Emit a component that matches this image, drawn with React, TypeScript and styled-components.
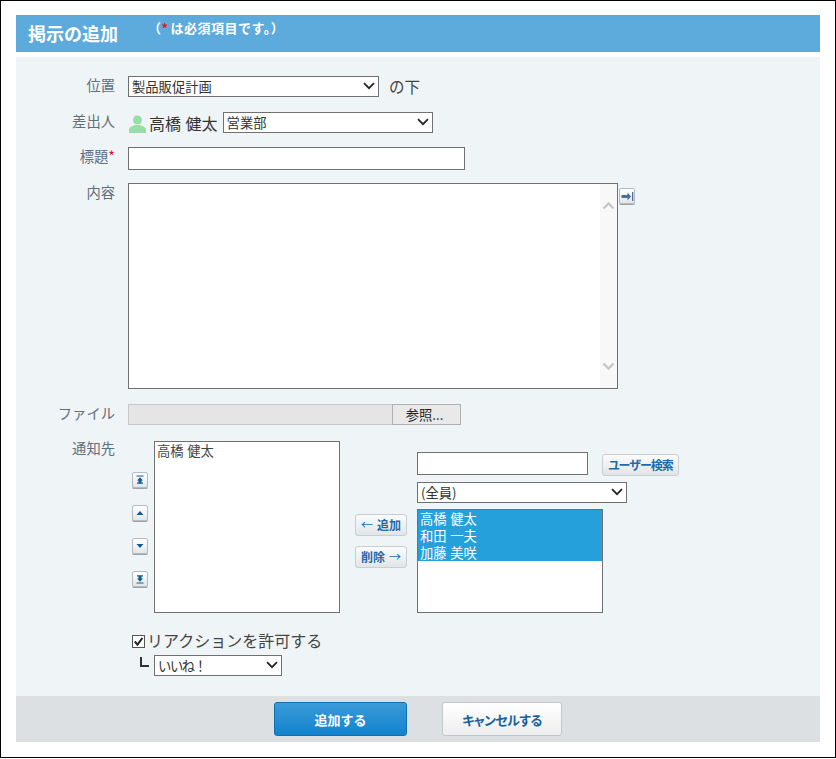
import React from 'react';
import styled, { createGlobalStyle } from 'styled-components';

const FONT = `"Noto Sans CJK JP", "Noto Sans", "Liberation Sans", sans-serif`;

const Global = createGlobalStyle`
  html, body { margin: 0; padding: 0; background: #fff; }
  body { font-family: ${FONT}; }
  * { box-sizing: border-box; }
`;

const Frame = styled.div`
  width: 836px;
  height: 758px;
  border: 1px solid #000;
  padding: 14px 15px 0;
  background: #fff;
`;
const Header = styled.header`
  height: 37px;
  background: #5dabdc;
  color: #fff;
  display: flex;
  align-items: flex-start;
  padding-left: 12px;
  margin-bottom: 5px;
`;
const Title = styled.h1`
  margin: 6px 0 0;
  font-size: 18px;
  line-height: 24px;
  font-weight: 700;
  width: 120px;
`;
const Note = styled.span`
  margin-top: 4px;
  font-size: 13px;
  line-height: 18px;
  font-weight: 700;
  letter-spacing: 0.5px;
`;
const Req = styled.span`
  color: #e8112d;
`;
const NoteReq = styled(Req)`
  margin-right: 2px;
`;
const Form = styled.form`
  margin: 0;
  height: 639px;
  background: #eff4f7;
  padding-top: 19px;
`;
const Row = styled.div<{ $after: number }>`
  display: grid;
  grid-template-columns: 112px 1fr;
  margin-bottom: ${p => p.$after}px;
`;
const Label = styled.label<{ $top?: number }>`
  text-align: right;
  padding-right: 13px;
  margin-top: ${p => p.$top ?? 0}px;
  font-size: 14.3px;
  line-height: 18px;
  color: #5f6f7c;
`;
const Inline = styled.div`
  display: flex;
  align-items: center;
  height: 21px;
`;
const SelectWrap = styled.div<{ $w: number }>`
  position: relative;
  width: ${p => p.$w}px;
  height: 21px;
  flex: none;
`;
const Select = styled.select<{ $tight?: boolean }>`
  display: block;
  appearance: none;
  width: 100%;
  height: 100%;
  border: 1px solid #707070;
  border-radius: 0;
  background: #fff;
  padding: 0 0 0 3px;
  font-family: ${FONT};
  font-size: 13.3px;
  line-height: 19px;
  letter-spacing: ${p => (p.$tight ? '-1.4px' : '0')};
  color: #333;
`;
const Caret = styled.svg`
  position: absolute;
  right: 4px;
  top: 6px;
  width: 12px;
  height: 8px;
  pointer-events: none;
`;
const Chevron = () => (
  <Caret viewBox="0 0 12 8">
    <path d="M1 1.2 6 6.2 11 1.2" fill="none" stroke="#222" strokeWidth="1.7" />
  </Caret>
);
const Drop = ({ w, value, tight }: { w: number; value: string; tight?: boolean }) => (
  <SelectWrap $w={w}>
    <Select defaultValue={value} $tight={tight}>
      <option>{value}</option>
    </Select>
    <Chevron />
  </SelectWrap>
);
const After = styled.span`
  margin: 0 0 2px 10px;
  font-size: 15.5px;
  line-height: 20px;
  color: #444;
`;
const Person = styled.svg`
  width: 17px;
  height: 18px;
  margin: 2px 3px 0 1px;
  flex: none;
`;
const Name = styled.span`
  font-size: 16px;
  line-height: 20px;
  color: #333;
  margin-right: 5px;
  white-space: pre;
  word-spacing: 1px;
`;
const TextInput = styled.input<{ $w: number; $h: number }>`
  display: block;
  width: ${p => p.$w}px;
  height: ${p => p.$h}px;
  border: 1px solid #707070;
  background: #fff;
  padding: 0 3px;
  outline: none;
`;
const AreaRow = styled.div`
  display: flex;
  align-items: flex-start;
`;
const AreaBox = styled.div`
  width: 490px;
  height: 206px;
  border: 1px solid #707070;
  background: #fff;
  display: flex;
`;
const Area = styled.textarea`
  flex: 1;
  border: 0;
  outline: none;
  resize: none;
  overflow: hidden;
  background: transparent;
`;
const Scroll = styled.div`
  width: 17px;
  background: #f8f8f8;
  display: flex;
  flex-direction: column;
  justify-content: space-between;
  padding: 17px 0 17px;
  align-items: center;
`;
const ScrollMark = styled.svg`
  width: 13px;
  height: 9px;
`;
const IconBtn = styled.button`
  width: 16px;
  height: 16px;
  padding: 0;
  display: flex;
  align-items: center;
  justify-content: center;
  border: 1px solid #b4bcc2;
  border-radius: 2px;
  background: linear-gradient(#ffffff, #e3e6e8);
  box-shadow: 0 1px 0 #9aa3a9;
`;
const ExpandBtn = styled(IconBtn)`
  margin: 5px 0 0 1px;
`;
const FileRow = styled.div`
  display: flex;
  height: 21px;
`;
const FileName = styled.div`
  width: 264px;
  background: #e5e5e5;
  border: 1px solid #c8c8c8;
  border-right: 0;
`;
const Browse = styled.button`
  width: 69px;
  padding: 0 4px 0 0;
  border: 1px solid #b0b0b0;
  background: #e9e9e9;
  font-family: ${FONT};
  font-size: 13.3px;
  line-height: 18px;
  color: #222;
`;
const Notify = styled.div`
  display: flex;
  align-items: flex-start;
  padding-left: 4px;
`;
const MoveCol = styled.div`
  width: 16px;
  margin-right: 6px;
  padding-top: 31px;
  display: flex;
  flex-direction: column;
  gap: 17px;
`;
const ListBox = styled.div<{ $w: number; $h: number }>`
  width: ${p => p.$w}px;
  height: ${p => p.$h}px;
  border: 1px solid #707070;
  background: #fff;
  font-size: 13.3px;
  line-height: 17px;
  color: #444;
  flex: none;
`;
const Opt = styled.div<{ $sel?: boolean }>`
  height: 17px;
  padding-left: 2px;
  overflow: hidden;
  white-space: pre;
  word-spacing: 0.6px;
  background: ${p => (p.$sel ? '#26a0da' : 'transparent')};
  color: ${p => (p.$sel ? '#fff' : '#444')};
`;
const MidCol = styled.div`
  margin: 73px 10px 0 15px;
  display: flex;
  flex-direction: column;
  gap: 10px;
`;
const SmallBtn = styled.button<{ $w: number }>`
  width: ${p => p.$w}px;
  height: 22px;
  padding: 0;
  border: 1px solid #c6cfd3;
  border-radius: 3px;
  background: linear-gradient(#fbfbfb, #e2e5e7);
  color: #1a6bab;
  font-family: ${FONT};
  font-size: 12px;
  line-height: 18px;
  font-weight: 700;
  white-space: pre;
  word-spacing: 1.5px;
`;
const Thin = styled.span`
  font-weight: 400;
`;
const RightCol = styled.div`
  padding-top: 11px;
  display: flex;
  flex-direction: column;
  gap: 6px;
`;
const SearchRow = styled.div`
  display: flex;
  align-items: flex-start;
  gap: 14px;
`;
const SearchBtn = styled(SmallBtn)`
  margin-top: 2px;
  font-feature-settings: "palt";
  letter-spacing: -1px;
`;
const OptionBlock = styled.div`
  padding: 19px 0 0 4px;
`;
const CheckRow = styled.label`
  display: flex;
  align-items: center;
  height: 16px;
  font-size: 16px;
  line-height: 16px;
  color: #444;
  white-space: nowrap;
`;
const CheckBox = styled.svg`
  width: 13px;
  height: 13px;
  margin: 2px 2px 0 0;
  flex: none;
`;
const SubRow = styled.div`
  display: flex;
  margin-top: 7px;
`;
const Corner = styled.span`
  width: 9px;
  height: 10px;
  margin: 2px 5px 0 8px;
  border-left: 2px solid #333;
  border-bottom: 2px solid #333;
`;
const Footer = styled.footer`
  height: 46px;
  background: #dce0e3;
  display: flex;
  justify-content: center;
  align-items: center;
  gap: 35px;
`;
const Primary = styled.button`
  width: 133px;
  height: 34px;
  padding: 0;
  border: 1px solid #0f70ae;
  border-radius: 3px;
  background: linear-gradient(#3a9bd9, #1283cd);
  color: #fff;
  font-family: ${FONT};
  font-size: 13px;
  font-weight: 700;
`;
const Secondary = styled.button`
  width: 120px;
  height: 34px;
  padding: 0;
  border: 1px solid #bfc8cd;
  border-radius: 3px;
  background: linear-gradient(#ffffff, #eeeeee);
  color: #16629f;
  font-family: ${FONT};
  font-size: 13px;
  font-weight: 700;
  font-feature-settings: "palt";
  letter-spacing: -0.6px;
`;
const MoveIcon = styled.svg`
  width: 10px;
  height: 10px;
`;
const ExpandIcon = styled.svg`
  width: 13px;
  height: 11px;
`;

const Move = ({ kind }: { kind: 'top' | 'up' | 'down' | 'bottom' }) => {
  const paths = {
    top: 'M1.5 0.5H8.5V1.5H1.5ZM5 2.2 8 5.4H6.5V7.5H8V8.8H2V7.5H3.5V5.4H2Z',
    up: 'M5 3 8.5 7H1.5Z',
    down: 'M1.5 3H8.5L5 7Z',
    bottom: 'M2 1.2H8V2.5H6.5V4.6H8L5 7.8 2 4.6H3.5V2.5H2ZM1.5 8.5H8.5V9.5H1.5Z',
  };
  return (
    <IconBtn type="button">
      <MoveIcon viewBox="0 0 10 10">
        <path d={paths[kind]} fill="#0f5c94" />
      </MoveIcon>
    </IconBtn>
  );
};

export default function App() {
  return (
    <>
      <Global />
      <Frame>
        <Header>
          <Title>掲示の追加</Title>
          <Note>（<NoteReq>*</NoteReq>は必須項目です。）</Note>
        </Header>
        <Form>
          <Row $after={15}>
            <Label>位置</Label>
            <Inline>
              <Drop w={251} value="製品販促計画" />
              <After>の下</After>
            </Inline>
          </Row>
          <Row $after={14}>
            <Label>差出人</Label>
            <Inline>
              <Person viewBox="0 0 17 18">
                <circle cx="8.5" cy="5" r="4.5" fill="#98dca6" />
                <path d="M0 18V14.5C0 12 4 11 6 10H11C13 11 17 12 17 14.5V18Z" fill="#98dca6" />
              </Person>
              <Name>高橋 健太</Name>
              <Drop w={210} value="営業部" />
            </Inline>
          </Row>
          <Row $after={13}>
            <Label>標題<Req>*</Req></Label>
            <TextInput $w={337} $h={23} />
          </Row>
          <Row $after={15}>
            <Label>内容</Label>
            <AreaRow>
              <AreaBox>
                <Area />
                <Scroll>
                  <ScrollMark viewBox="0 0 13 9">
                    <path d="M1.5 7.5 6.5 2.5 11.5 7.5" fill="none" stroke="#c8c8c8" strokeWidth="2.4" />
                  </ScrollMark>
                  <ScrollMark viewBox="0 0 13 9">
                    <path d="M1.5 1.5 6.5 6.5 11.5 1.5" fill="none" stroke="#c8c8c8" strokeWidth="2.4" />
                  </ScrollMark>
                </Scroll>
              </AreaBox>
              <ExpandBtn type="button">
                <ExpandIcon viewBox="0 0 13 11">
                  <path d="M0.5 4H6.5V1.5L10 5.5 6.5 9.5V7H0.5ZM11 1H12.3V10H11Z" fill="#4a6f9c" />
                </ExpandIcon>
              </ExpandBtn>
            </AreaRow>
          </Row>
          <Row $after={16}>
            <Label>ファイル</Label>
            <FileRow>
              <FileName />
              <Browse type="button">参照...</Browse>
            </FileRow>
          </Row>
          <Row $after={0}>
            <Label $top={-2}>通知先</Label>
            <div>
              <Notify>
                <MoveCol>
                  <Move kind="top" />
                  <Move kind="up" />
                  <Move kind="down" />
                  <Move kind="bottom" />
                </MoveCol>
                <ListBox $w={186} $h={172}>
                  <Opt>高橋 健太</Opt>
                </ListBox>
                <MidCol>
                  <SmallBtn $w={52} type="button"><Thin>← </Thin>追加</SmallBtn>
                  <SmallBtn $w={52} type="button">削除<Thin> →</Thin></SmallBtn>
                </MidCol>
                <RightCol>
                  <SearchRow>
                    <TextInput $w={171} $h={23} />
                    <SearchBtn $w={77} type="button">ユーザー検索</SearchBtn>
                  </SearchRow>
                  <Drop w={210} value="(全員)" />
                  <ListBox $w={186} $h={104}>
                    <Opt $sel>高橋 健太</Opt>
                    <Opt $sel>和田 一夫</Opt>
                    <Opt $sel>加藤 美咲</Opt>
                  </ListBox>
                </RightCol>
              </Notify>
              <OptionBlock>
                <CheckRow>
                  <CheckBox viewBox="0 0 13 13">
                    <rect x="0.5" y="0.5" width="12" height="12" fill="#fff" stroke="#555" />
                    <path d="M2.8 6.5 5.5 9.6 10.4 3" fill="none" stroke="#222" strokeWidth="2" />
                  </CheckBox>
                  リアクションを許可する
                </CheckRow>
                <SubRow>
                  <Corner />
                  <Drop w={128} value="いいね！" tight />
                </SubRow>
              </OptionBlock>
            </div>
          </Row>
        </Form>
        <Footer>
          <Primary type="button">追加する</Primary>
          <Secondary type="button">キャンセルする</Secondary>
        </Footer>
      </Frame>
    </>
  );
}
